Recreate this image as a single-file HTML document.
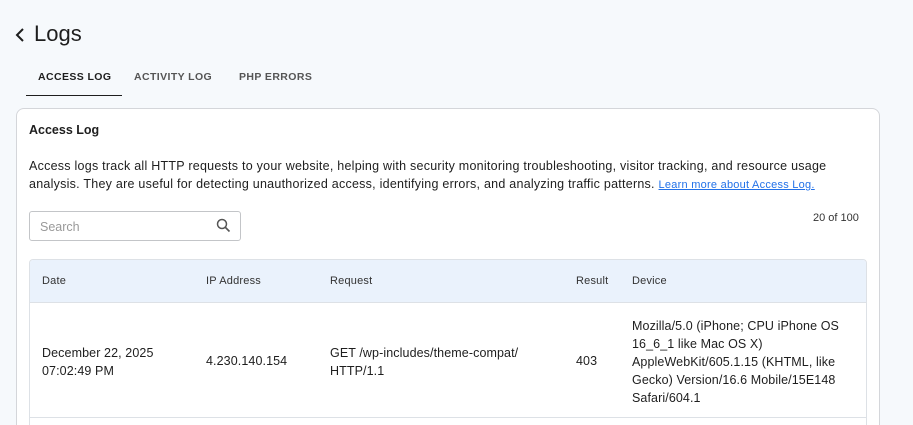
<!DOCTYPE html>
<html><head><meta charset="utf-8"><style>
html,body{margin:0;width:913px;height:425px;overflow:hidden}
body{background:#f6f9fc;font-family:"Liberation Sans",sans-serif;color:#1e1e1e;position:relative}
.abs{position:absolute}
h1{position:absolute;left:34px;top:21px;margin:0;font-size:22px;font-weight:normal;color:#1e1e1e}
.tab{position:absolute;top:71px;font-size:10.5px;font-weight:bold;letter-spacing:0.4px;color:#555}
.card{position:absolute;left:16px;top:108px;width:862px;height:330px;background:#fff;border:1px solid #d4d6da;border-radius:8px}
.t{font-size:12.5px;line-height:18px;letter-spacing:0.25px}
.tbl{position:absolute;left:29px;top:259px;width:836px;height:170px;border:1px solid #dde1e6;border-radius:4px;overflow:hidden}
.hd{position:absolute;left:0;top:0;width:100%;height:42px;background:#eaf2fc;border-bottom:1px solid #dde1e6}
.th{position:absolute;top:14px;font-size:11px;color:#333;letter-spacing:0.2px}
.td{position:absolute;font-size:12.5px;line-height:18px;color:#1e1e1e;letter-spacing:0.1px}
</style></head><body>
<svg class="abs" style="left:14px;top:27px" width="12" height="16" viewBox="0 0 12 16"><path d="M9 2L3 8l6 6" fill="none" stroke="#1e1e1e" stroke-width="2"/></svg>
<h1>Logs</h1>
<div class="tab" style="left:38px;color:#1e1e1e">ACCESS LOG</div>
<div class="tab" style="left:134px">ACTIVITY LOG</div>
<div class="tab" style="left:239px">PHP ERRORS</div>
<div class="abs" style="left:26px;top:95px;width:96px;height:1px;background:#1e1e1e"></div>
<div class="card"></div>
<div class="abs" style="left:29px;top:123px;font-size:12.5px;font-weight:bold">Access Log</div>
<div class="abs t" style="left:29px;top:157px;width:850px">Access logs track all HTTP requests to your website, helping with security monitoring troubleshooting, visitor tracking, and resource usage<br>analysis. They are useful for detecting unauthorized access, identifying errors, and analyzing traffic patterns. <span style="color:#2271e8;text-decoration:underline;font-size:11px">Learn more about Access Log.</span></div>
<div class="abs" style="left:29px;top:211px;width:210px;height:28px;border:1px solid #c3c5c8;border-radius:3px;background:#fff"></div>
<div class="abs" style="left:40px;top:220px;font-size:12.5px;color:#999">Search</div>
<svg class="abs" style="left:216px;top:218px" width="15" height="15" viewBox="0 0 15 15"><circle cx="6" cy="6" r="4.5" fill="none" stroke="#555" stroke-width="1.5"/><path d="M9.5 9.5L13.5 13.5" stroke="#555" stroke-width="1.6"/></svg>
<div class="abs" style="left:813px;top:212px;font-size:11px;color:#333">20 of 100</div>
<div class="tbl">
<div class="hd"></div>
<div class="th" style="left:12px;top:15px">Date</div>
<div class="th" style="left:176px;top:15px">IP Address</div>
<div class="th" style="left:300px;top:15px">Request</div>
<div class="th" style="left:546px;top:15px">Result</div>
<div class="th" style="left:602px;top:15px">Device</div>
<div class="td" style="left:12px;top:84px">December 22, 2025<br>07:02:49 PM</div>
<div class="td" style="left:176px;top:92px">4.230.140.154</div>
<div class="td" style="left:300px;top:84px">GET /wp-includes/theme-compat/<br>HTTP/1.1</div>
<div class="td" style="left:546px;top:92px">403</div>
<div class="td" style="left:602px;top:57px;width:232px">Mozilla/5.0 (iPhone; CPU iPhone OS<br>16_6_1 like Mac OS X)<br>AppleWebKit/605.1.15 (KHTML, like<br>Gecko) Version/16.6 Mobile/15E148<br>Safari/604.1</div>
<div class="abs" style="left:0;top:157px;width:100%;height:1px;background:#dde1e6"></div>
</div>
</body></html>
